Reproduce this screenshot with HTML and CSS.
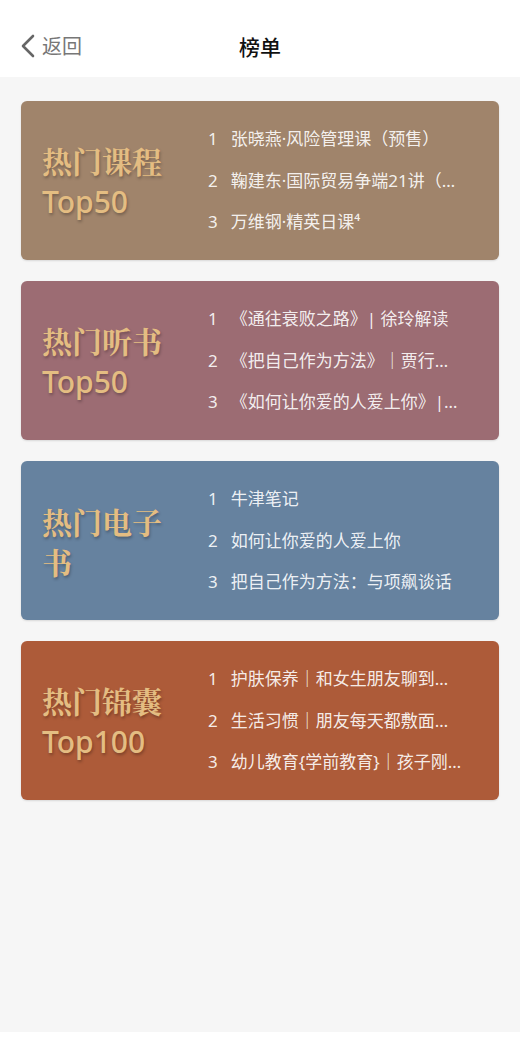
FILE: index.html
```html
<!DOCTYPE html>
<html lang="zh-CN">
<head>
<meta charset="utf-8">
<title>榜单</title>
<link rel="stylesheet" href="styles.css">
</head>
<body>
<header class="nav">
  <div class="back">
    <svg class="chev" width="16" height="24" viewBox="0 0 16 24"><path d="M13 2 L3 12 L13 22" fill="none" stroke="#666" stroke-width="2.6" stroke-linecap="round" stroke-linejoin="round"/></svg>
    <span>返回</span>
  </div>
  <div class="title">榜单</div>
</header>
<main class="main">
  <section class="card c1">
    <div class="head">热门课程<br><span class="lat">Top50</span></div>
    <ol class="list">
      <li><span class="n">1</span>张晓燕·风险管理课（预售）</li>
      <li><span class="n">2</span>鞠建东·国际贸易争端21讲（…</li>
      <li><span class="n">3</span>万维钢·精英日课⁴</li>
    </ol>
  </section>
  <section class="card c2">
    <div class="head">热门听书<br><span class="lat">Top50</span></div>
    <ol class="list">
      <li><span class="n">1</span>《通往衰败之路》| 徐玲解读</li>
      <li><span class="n">2</span>《把自己作为方法》｜贾行…</li>
      <li><span class="n">3</span>《如何让你爱的人爱上你》|…</li>
    </ol>
  </section>
  <section class="card c3">
    <div class="head">热门电子书</div>
    <ol class="list">
      <li><span class="n">1</span>牛津笔记</li>
      <li><span class="n">2</span>如何让你爱的人爱上你</li>
      <li><span class="n">3</span>把自己作为方法：与项飙谈话</li>
    </ol>
  </section>
  <section class="card c4">
    <div class="head">热门锦囊<br><span class="lat">Top100</span></div>
    <ol class="list">
      <li><span class="n">1</span>护肤保养｜和女生朋友聊到…</li>
      <li><span class="n">2</span>生活习惯｜朋友每天都敷面…</li>
      <li><span class="n">3</span>幼儿教育{学前教育}｜孩子刚…</li>
    </ol>
  </section>
</main>
</body>
</html>
```

FILE: styles.css
```css
* { box-sizing: border-box; }
html, body { margin: 0; padding: 0; }
body {
  width: 520px;
  background: #ffffff;
  font-family: "Noto Sans CJK SC", "Noto Sans", sans-serif;
}
.nav {
  height: 77px;
  display: flex;
  align-items: center;
  justify-content: center;
  position: relative;
  background: #fff;
  padding-top: 15px;
}
.back {
  position: absolute;
  left: 20px;
  top: 34px;
  display: flex;
  align-items: center;
  gap: 6px;
  color: #777;
  font-size: 20px;
  line-height: 24px;
}
.chev { display: block; }
.title {
  font-size: 21px;
  font-weight: 500;
  color: #111;
  line-height: 28px;
}
.main {
  background: #f6f6f6;
  min-height: 955px;
  padding: 24px 21px 20px;
  display: flex;
  flex-direction: column;
  gap: 21px;
}
.card {
  height: 159px;
  border-radius: 6px;
  display: flex;
  align-items: center;
  padding-left: 21px;
  box-shadow: 0 1px 2px rgba(0,0,0,0.12);
}
.c1 { background: #a0846b; }
.c2 { background: #9c6c73; }
.c3 { background: #66829f; }
.c4 { background: #ad5b39; }
.head {
  width: 140px;
  flex: none;
  font-family: "Noto Serif CJK SC", "Noto Sans CJK SC", serif;
  font-size: 30px;
  line-height: 40px;
  font-weight: 700;
  color: #e4bd82;
  text-shadow: 1px 2px 3px rgba(0,0,0,0.28);
  margin-right: 26px;
}
.lat {
  font-family: "Noto Sans", "Noto Sans CJK SC", sans-serif;
  font-weight: 500;
}
.list {
  list-style: none;
  margin: 0;
  padding: 0;
  flex: 1;
  min-width: 0;
  padding-right: 21px;
}
.list li {
  height: 41.5px;
  line-height: 41.5px;
  font-size: 17px;
  font-family: "Noto Sans", "Noto Sans CJK SC", sans-serif;
  color: rgba(255,255,255,0.9);
  white-space: nowrap;
}
.n { display: inline-block; margin-right: 13px; }
```
